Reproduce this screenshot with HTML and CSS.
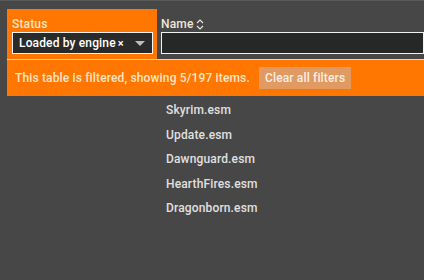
FILE: index.html
```html
<!DOCTYPE html>
<html lang="en">
<head>
    <meta charset="UTF-8">
    <title>Plugins</title>
    <link rel="stylesheet" href="styles.css">
</head>
<body>
    <div class="table">
        <div class="head-row">
            <div class="col col-status filtered">
                <div class="col-title">Status</div>
                <div class="select">
                    <span class="chip">Loaded by engine<span class="chip-x">×</span></span>
                    <span class="caret"></span>
                </div>
            </div>
            <div class="col col-name">
                <div class="col-title">Name
                    <svg class="sort" width="8" height="11" viewBox="0 0 8 11">
                        <path d="M1 4 L4 1 L7 4 M1 7 L4 10 L7 7" fill="none" stroke="#e6e6e6" stroke-width="1.2"/>
                    </svg>
                </div>
                <input class="text-filter" type="text">
            </div>
        </div>

        <div class="filter-bar">
            <span>This table is filtered, showing 5/197 items.</span>
            <button class="clear-btn">Clear all filters</button>
        </div>

        <div class="rows">
            <div class="row">Skyrim.esm</div>
            <div class="row">Update.esm</div>
            <div class="row">Dawnguard.esm</div>
            <div class="row">HearthFires.esm</div>
            <div class="row">Dragonborn.esm</div>
        </div>
    </div>
</body>
</html>
```

FILE: styles.css
```css
body {
    margin: 0;
    background: #474747;
    font-family: Roboto, "Liberation Sans", sans-serif;
    font-size: 12px;
    letter-spacing: 0.15px;
    color: #e4e4e4;
    overflow: hidden;
}

.table {
    padding: 8px 0 0 7px;
    border-top: 1px solid #5a5a5a;
}

.head-row {
    display: flex;
    border-bottom: 1px solid #d8d8d8;
    height: 51px;
    box-sizing: border-box;
}

.col {
    padding: 7px 0 0 5px;
    box-sizing: border-box;
}

.col-status {
    width: 150px;
    flex: none;
}

.filtered {
    background: #ff7700;
}

.col-name {
    flex: 1;
    padding-left: 4px;
}

.col-title {
    font-weight: 500;
    color: #f0e6dc;
    height: 16px;
    line-height: 14px;
    display: flex;
    align-items: center;
    gap: 3px;
}

.filtered .col-title {
    color: #ffe5c8;
}

.sort {
    display: block;
}

.select {
    width: 141px;
    height: 22px;
    box-sizing: border-box;
    border: 1px solid #f2f2f2;
    background: #2a2a2a;
    display: flex;
    align-items: center;
    padding-left: 6px;
}

.chip {
    color: #ffffff;
    font-weight: 500;
    font-size: 12px;
}

.chip-x {
    margin-left: 2px;
    font-size: 11px;
}

.caret {
    margin-left: 11px;
    width: 0;
    height: 0;
    border-left: 5px solid transparent;
    border-right: 5px solid transparent;
    border-top: 5px solid #bdbdbd;
}

.text-filter {
    display: block;
    width: 100%;
    height: 22px;
    box-sizing: border-box;
    border: 1px solid #f2f2f2;
    background: #262828;
    margin: 0;
    outline: none;
    color: #fff;
}

.filter-bar {
    background: #ff7700;
    height: 36px;
    display: flex;
    align-items: center;
    padding-left: 8px;
    color: #ffe5c8;
    font-weight: 500;
}

.clear-btn {
    margin-left: 9px;
    height: 22px;
    padding: 0 6px;
    border: none;
    background: #e09a62;
    color: #fbeee2;
    font-family: inherit;
    font-size: 12px;
    font-weight: 500;
    letter-spacing: 0.15px;
}

.rows {
    padding: 2px 0 0 159px;
}

.row {
    height: 24.5px;
    line-height: 24.5px;
    font-weight: 500;
    color: #e0e0e0;
}
```
